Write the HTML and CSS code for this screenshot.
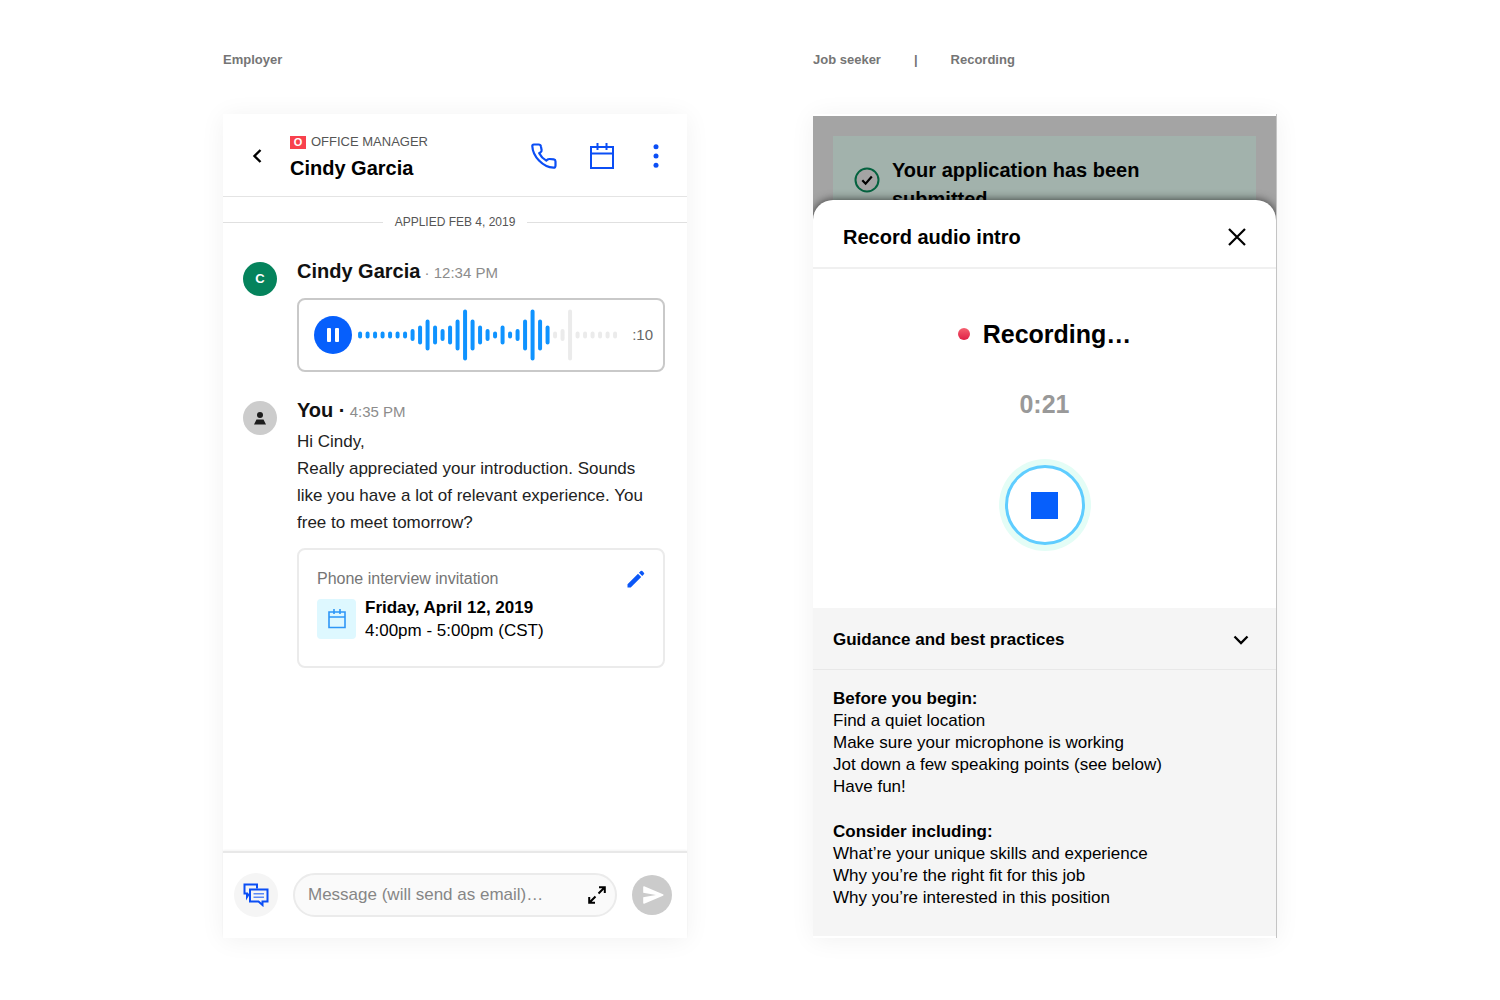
FILE: index.html
```html
<!DOCTYPE html>
<html lang="en">
<head>
<meta charset="utf-8">
<meta name="viewport" content="width=device-width, initial-scale=1">
<title>Audio introductions</title>
<link rel="stylesheet" href="styles.css">
</head>
<body>
<main class="board">
  <section class="column">
    <p class="caption">Employer</p>
    <div class="phone">
      <header class="chat-header">
        <button class="icon-button back" type="button" aria-label="Back">
          <svg width="10" height="14" viewBox="0 0 10 14"><path d="M8.500 1L2.500 7l6 6" fill="none" stroke="#000" stroke-width="2.400"/></svg>
        </button>
        <div class="contact">
          <p class="role"><span class="tag">O</span>OFFICE MANAGER</p>
          <h1 class="contact-name">Cindy Garcia</h1>
        </div>
        <nav class="actions" aria-label="Conversation actions">
          <button class="icon-button" type="button" aria-label="Call">
            <svg width="26" height="26" viewBox="0 0 26 26"><path d="M2.800 1.500H7.600Q9.600 1.500 9.900 3.400L10.600 7Q10.800 8.400 9.500 9.300L8.200 10.200Q10.500 14.800 15.300 17.600L16.600 16.500Q17.400 15.900 18.600 16L22.800 16.400Q24.500 16.700 24.500 18.400V22.600Q24.500 24.800 22.600 24.700Q14.500 24.300 8 17.500Q1.600 10.800 1.300 3Q1.300 1.500 2.800 1.500Z" fill="none" stroke="#0b4ef5" stroke-width="2.200" stroke-linejoin="round"/></svg>
          </button>
          <button class="icon-button" type="button" aria-label="Schedule">
            <svg width="24" height="26" viewBox="0 0 24 26"><path d="M1 4h22v21H1zM1 10.500h22M7.500 0v7M16.500 0v7" fill="none" stroke="#0b4ef5" stroke-width="2"/></svg>
          </button>
          <button class="icon-button" type="button" aria-label="More">
            <svg width="6" height="24" viewBox="0 0 6 24" fill="#0b4ef5"><circle cx="3" cy="2.700" r="2.500"/><circle cx="3" cy="12" r="2.500"/><circle cx="3" cy="21.300" r="2.500"/></svg>
          </button>
        </nav>
      </header>

      <p class="divider">APPLIED FEB 4, 2019</p>

      <div class="thread">
        <article class="message">
          <span class="avatar avatar-green">C</span>
          <div class="message-body">
            <p class="byline"><strong>Cindy Garcia</strong> · 12:34 PM</p>
            <div class="player">
              <button class="pause" type="button" aria-label="Pause">
                <svg width="12" height="14" viewBox="0 0 12 14" fill="#fff"><rect width="4" height="14" rx="1"/><rect x="8" width="4" height="14" rx="1"/></svg>
              </button>
              <svg class="wave" viewBox="0 0 260 52" fill="none" stroke-width="4" stroke-linecap="round" aria-hidden="true">
                <path stroke="#0f93ff" d="M2 24.500v3M9.500 24.500v3M17 24.500v3M24.500 24.500v3M32 24.500v3M39.500 24.500v3M47 24.500v3M54.500 22v8M62 18.500v15M69.500 12.500v27M77 18.500v15M84.500 22v8M92 18.500v15M99.500 12.500v27M107 2.500v47M114.500 12.500v27M122 18.500v15M129.500 22v8M137 24.500v3M144.500 18.500v15M152 24.500v3M159.500 22v8M167 12.500v27M174.500 2.500v47M182 12.500v27M189.500 18.500v15"/>
                <path stroke="#ebebeb" d="M197 24.500v3M204.500 22v8M212 2.500v47M219.500 24.500v3M227 24.500v3M234.500 24.500v3M242 24.500v3M249.500 24.500v3M257 24.500v3"/>
              </svg>
              <span class="remaining">:10</span>
            </div>
          </div>
        </article>

        <article class="message">
          <span class="avatar">
            <svg width="12" height="13" viewBox="0 0 12 13" fill="#1c1c1c"><circle cx="6" cy="3" r="3"/><path d="M2.500 7.500h7L12 12.500H0z"/></svg>
          </span>
          <div class="message-body">
            <p class="byline"><strong>You ·</strong> 4:35 PM</p>
            <p class="text">Hi Cindy,<br>Really appreciated your introduction. Sounds<br>like you have a lot of relevant experience. You<br>free to meet tomorrow?</p>
            <div class="invite">
              <div class="invite-top">
                <p class="invite-label">Phone interview invitation</p>
                <button class="icon-button" type="button" aria-label="Edit invitation">
                  <svg width="18" height="18" viewBox="0 0 18 18" fill="#0b57f7"><path d="M0.500 17.500v-3.200L11 3.800l3.200 3.200L3.700 17.500zM12 2.800l1.700-1.700q.8-.8 1.600 0l1.600 1.600q.8.800 0 1.600l-1.700 1.700z"/></svg>
                </button>
              </div>
              <div class="invite-row">
                <span class="date-tile">
                  <svg width="18" height="20" viewBox="0 0 18 20"><path d="M1 3h16v15.500H1zM1 8h16M6 0v5M12 0v5" fill="none" stroke="#2e96f7" stroke-width="1.600"/></svg>
                </span>
                <p class="slot"><strong>Friday, April 12, 2019</strong><br>4:00pm - 5:00pm (CST)</p>
              </div>
            </div>
          </div>
        </article>
      </div>

      <form class="composer">
        <button class="round templates" type="button" aria-label="Message templates">
          <svg width="26" height="24" viewBox="0 0 26 24" fill="none" stroke="#0b4ef5" stroke-width="2"><path d="M7 11.500H5.500L4 14V10.500H1.500V1.500H14V5.500"/><path d="M7 6.500h17.500v12h-5v3.500l-4-3.500H7z"/><path d="M10.500 10.800h10.500M10.500 14.200h10.500" stroke-width="1.400" stroke="#5b8af8"/></svg>
        </button>
        <div class="field">
          <input class="field-input" type="text" aria-label="Message" placeholder="Message (will send as email)…">
          <button class="icon-button" type="button" aria-label="Expand">
            <svg width="18" height="18" viewBox="0 0 18 18" fill="none" stroke="#000" stroke-width="2"><path d="M11 1.200h5.800V7M16.500 1.500l-6 6M1.200 11v5.800H7M1.500 16.500l6-6"/></svg>
          </button>
        </div>
        <button class="round send" type="submit" aria-label="Send">
          <svg width="22" height="18" viewBox="0 0 22 18" fill="#fff"><path d="M1.200.2 20 8.200q1.500.8 0 1.600L1.200 17.800Q.2 18 .2 17V11.200L13 9 .2 6.800V1Q.2 0 1.200.2z"/></svg>
        </button>
      </form>
    </div>
  </section>

  <section class="column">
    <p class="caption caption-path"><span>Job seeker</span><span>|</span><span>Recording</span></p>
    <div class="phone phone-seeker">
      <div class="backdrop">
        <div class="banner">
          <svg class="banner-icon" width="26" height="26" viewBox="0 0 26 26"><circle cx="13" cy="13" r="11.500" fill="#a4a4a4" stroke="#04623f" stroke-width="2"/><path d="M8.300 13.200l3.300 3.500 6.200-7.200" fill="none" stroke="#000" stroke-width="2.200"/></svg>
          <p class="banner-text">Your application has been submitted</p>
        </div>
      </div>
      <div class="sheet">
        <header class="sheet-header">
          <h2 class="sheet-title">Record audio intro</h2>
          <button class="icon-button" type="button" aria-label="Close">
            <svg width="18" height="18" viewBox="0 0 18 18"><path d="M1 1l16 16M17 1L1 17" fill="none" stroke="#000" stroke-width="2.200"/></svg>
          </button>
        </header>
        <div class="recorder">
          <p class="status"><span class="dot"></span>Recording…</p>
          <p class="timer">0:21</p>
          <button class="stop" type="button" aria-label="Stop recording"><span class="stop-square"></span></button>
        </div>
        <div class="guidance">
          <button class="guidance-toggle" type="button" aria-expanded="true">Guidance and best practices
            <svg width="16" height="10" viewBox="0 0 16 10"><path d="M1.500 1.500L8 8l6.500-6.500" fill="none" stroke="#000" stroke-width="2.300"/></svg>
          </button>
          <div class="tips">
            <h3>Before you begin:</h3>
            <ul>
              <li>Find a quiet location</li>
              <li>Make sure your microphone is working</li>
              <li>Jot down a few speaking points (see below)</li>
              <li>Have fun!</li>
            </ul>
            <h3>Consider including:</h3>
            <ul>
              <li>What’re your unique skills and experience</li>
              <li>Why you’re the right fit for this job</li>
              <li>Why you’re interested in this position</li>
            </ul>
          </div>
        </div>
      </div>
    </div>
  </section>
</main>
</body>
</html>
```

FILE: styles.css
```css
* {
  box-sizing: border-box;
}

body {
  margin: 0;
  background: #fff;
  color: #111;
  font-family: "Liberation Sans", Arial, Helvetica, sans-serif;
  font-size: 17px;
  line-height: 22px;
}

p, h1, h2, h3, ul {
  margin: 0;
  padding: 0;
}

ul {
  list-style: none;
}

svg {
  display: block;
}

button {
  padding: 0;
  border: 0;
  background: none;
  color: inherit;
  font: inherit;
  cursor: pointer;
}

.icon-button {
  flex: none;
}

.board {
  display: grid;
  grid-template-columns: 1fr 1fr;
  gap: 126px;
  max-width: 1054px;
  margin: 0 auto;
  padding: 49px 0 62px;
}

.column {
  display: flex;
  flex-direction: column;
  gap: 43px;
}

.caption {
  color: #757575;
  font-size: 13px;
  font-weight: bold;
}

.caption-path {
  display: flex;
  gap: 33px;
}

.phone {
  display: flex;
  flex: 1;
  flex-direction: column;
  min-height: 824px;
  background: #fff;
  box-shadow: 0 2px 24px rgba(0, 0, 0, 0.06);
}

/* Conversation */

.chat-header {
  display: flex;
  align-items: center;
  padding: 16px 28px 14px 29px;
  border-bottom: 1px solid #e4e4e4;
}

.contact {
  flex: 1;
  margin-left: 28px;
}

.role {
  display: flex;
  align-items: center;
  gap: 5px;
  color: #555;
  font-size: 13px;
  line-height: 24px;
}

.tag {
  width: 16px;
  background: #f8414d;
  color: #fff;
  font-size: 11px;
  font-weight: bold;
  line-height: 13px;
  text-align: center;
}

.contact-name {
  color: #000;
  font-size: 20px;
  line-height: 28px;
}

.actions {
  display: flex;
  align-items: center;
  gap: 39px;
}

.actions .icon-button:first-child {
  margin-right: -6px;
}

.divider {
  display: flex;
  align-items: center;
  gap: 12px;
  padding: 14px 0;
  color: #555;
  font-size: 12px;
}

.divider::before,
.divider::after {
  flex: 1;
  height: 1px;
  background: #e0e0e0;
  content: "";
}

.thread {
  display: flex;
  flex: 1;
  flex-direction: column;
  gap: 24px;
  padding: 10px 22px 24px 20px;
}

.message {
  display: flex;
  gap: 20px;
}

.avatar {
  display: flex;
  flex: none;
  align-items: center;
  justify-content: center;
  width: 34px;
  height: 34px;
  margin-top: 5px;
  border-radius: 50%;
  background: #ccc;
}

.avatar-green {
  background: #05835c;
  color: #fff;
  font-size: 13px;
  font-weight: bold;
}

.message-body {
  flex: 1;
}

.byline {
  color: #8c8c8c;
  font-size: 15px;
  line-height: 28px;
}

.byline strong {
  color: #111;
  font-size: 20px;
}

.player {
  display: flex;
  align-items: center;
  margin-top: 11px;
  padding: 9px 10px 9px 15px;
  border: 2px solid #c9c9c9;
  border-radius: 8px;
}

.pause {
  display: flex;
  flex: none;
  align-items: center;
  justify-content: center;
  width: 38px;
  height: 38px;
  border-radius: 50%;
  background: #065ffc;
}

.wave {
  flex: 1;
  height: 52px;
  margin: 0 14px 0 6px;
}

.remaining {
  color: #666;
  font-size: 15px;
}

.text {
  margin-top: 2px;
  color: #222;
  line-height: 27px;
}

.invite {
  margin-top: 12px;
  padding: 18px 18px 16px;
  border: 2px solid #ebebeb;
  border-radius: 8px;
}

.invite-top {
  display: flex;
  align-items: center;
  justify-content: space-between;
}

.invite-label {
  color: #757575;
  font-size: 16px;
}

.invite-row {
  display: flex;
  align-items: center;
  gap: 9px;
  padding: 6px 0 8px;
}

.date-tile {
  display: flex;
  align-items: center;
  justify-content: center;
  width: 39px;
  height: 40px;
  border-radius: 4px;
  background: #def8ff;
}

.slot {
  color: #000;
  line-height: 23px;
}

.composer {
  display: flex;
  align-items: center;
  gap: 15px;
  padding: 20px 15px 21px 11px;
  border-top: 2px solid #e8e8e8;
  box-shadow: 0 -1px 2px rgba(0, 0, 0, 0.05);
}

.round {
  display: flex;
  flex: none;
  align-items: center;
  justify-content: center;
  border-radius: 50%;
}

.templates {
  width: 44px;
  height: 44px;
  background: #f5f5f5;
}

.field {
  display: flex;
  flex: 1;
  align-items: center;
  padding: 0 9px 0 13px;
  border: 2px solid #ebebeb;
  border-radius: 22px;
  background: #fafafa;
}

.field-input {
  flex: 1;
  min-width: 0;
  height: 40px;
  padding: 0;
  border: 0;
  outline: 0;
  background: none;
  color: #222;
  font: inherit;
}

.field-input::placeholder {
  color: #868686;
}

.send {
  width: 40px;
  height: 40px;
  padding-left: 3px;
  background: #cbcbcb;
}

/* Recording */

.phone-seeker {
  overflow: hidden;
  padding: 2px 0;
  border-right: 1px solid #c4c4c4;
}

.backdrop {
  height: 104px;
  padding: 20px 20px 0;
  overflow: hidden;
  background: #a4a4a4;
}

.banner {
  display: flex;
  gap: 12px;
  padding: 20px 80px 20px 21px;
  background: #a2b2ac;
}

.banner-icon {
  flex: none;
  margin-top: 11px;
}

.banner-text {
  color: #000;
  font-size: 20px;
  font-weight: bold;
  line-height: 29px;
}

.sheet {
  position: relative;
  display: flex;
  flex: 1;
  flex-direction: column;
  margin-top: -20px;
  border-radius: 20px 20px 0 0;
  background: #fff;
  box-shadow: 0 0 10px rgba(0, 0, 0, 0.7);
  clip-path: inset(-20px 0 0 0);
}

.sheet-header {
  display: flex;
  align-items: center;
  justify-content: space-between;
  padding: 22px 30px 15px;
  border-bottom: 2px solid #f0f0f0;
}

.sheet-title {
  color: #000;
  font-size: 20px;
  line-height: 30px;
}

.recorder {
  display: flex;
  flex-direction: column;
  align-items: center;
  padding: 48px 0 63px;
}

.status {
  display: flex;
  align-items: center;
  gap: 13px;
  color: #000;
  font-size: 25px;
  font-weight: bold;
  line-height: 34px;
}

.dot {
  width: 12px;
  height: 12px;
  border-radius: 50%;
  background: linear-gradient(#f5606f, #df1f45);
}

.timer {
  margin-top: 36px;
  color: #999;
  font-size: 25px;
  font-weight: bold;
  line-height: 34px;
}

.stop {
  display: flex;
  align-items: center;
  justify-content: center;
  width: 80px;
  height: 80px;
  margin-top: 44px;
  border: 3px solid #5fcdff;
  border-radius: 50%;
  background: #fff;
  box-shadow: 0 0 0 6px #e4fdf6;
}

.stop-square {
  width: 27px;
  height: 27px;
  background: #065ffc;
}

.guidance {
  flex: 1;
  background: #f5f5f5;
}

.guidance-toggle {
  display: flex;
  align-items: center;
  justify-content: space-between;
  width: 100%;
  padding: 21px 27px 18px 20px;
  border-bottom: 1px solid #e8e8e8;
  color: #000;
  font-weight: bold;
}

.tips {
  padding: 18px 20px 27px;
  color: #000;
}

.tips h3 {
  font-size: 17px;
}

.tips ul + h3 {
  margin-top: 23px;
}
```
